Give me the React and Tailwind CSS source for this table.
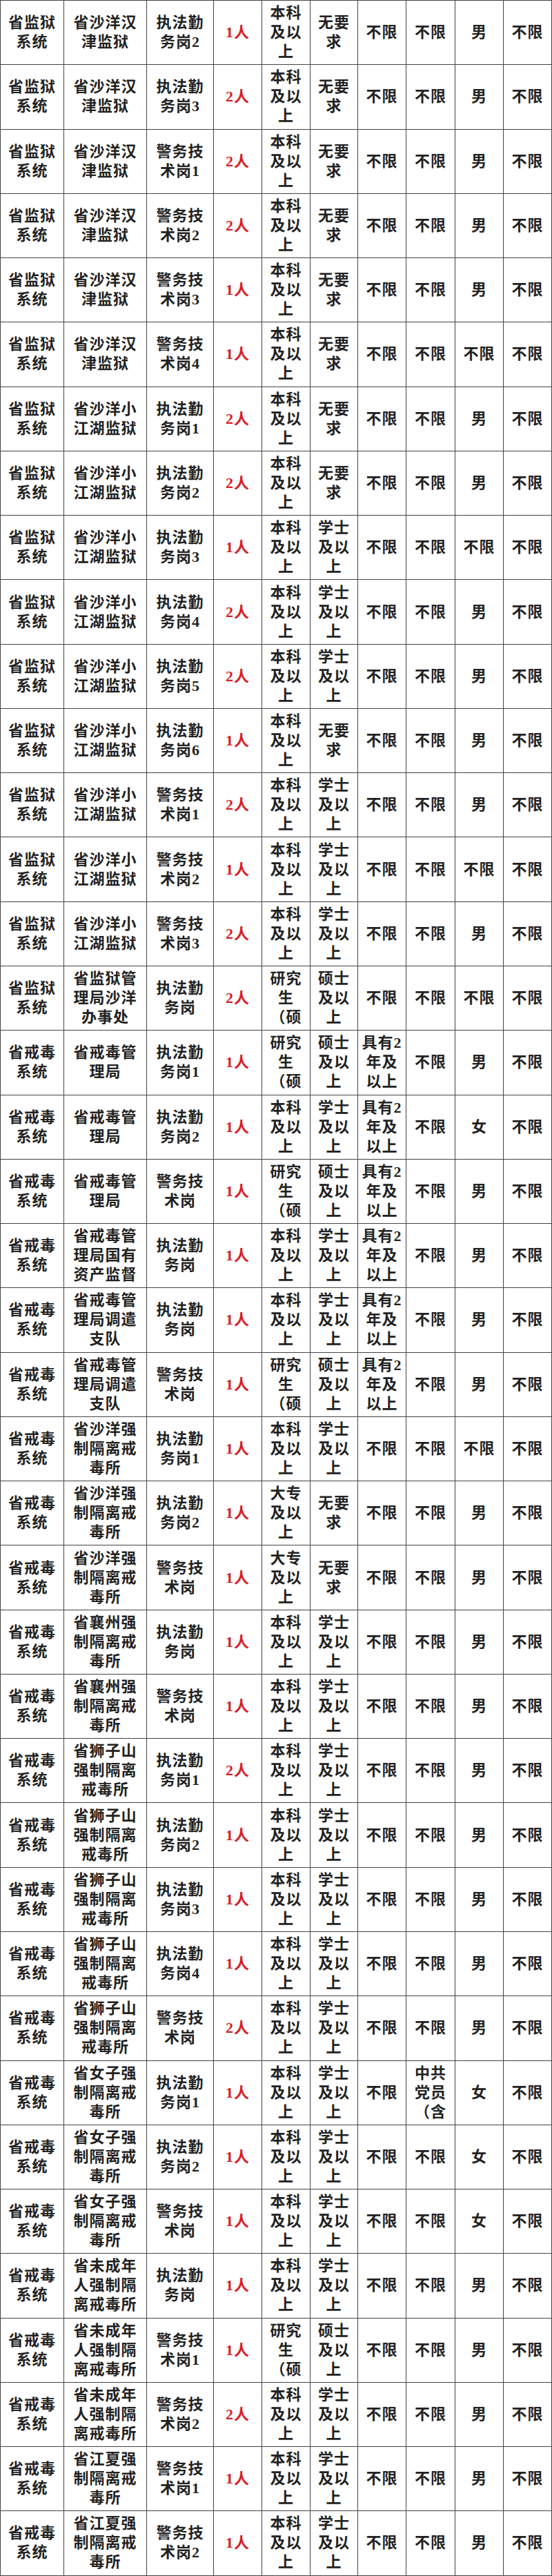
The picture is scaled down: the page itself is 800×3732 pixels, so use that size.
const BK = '本科\n及以\n上'
const DZ = '大专\n及以\n上'
const YJ = '研究\n生\n（硕'
const XS = '学士\n及以\n上'
const SS = '硕士\n及以\n上'
const WY = '无要\n求'
const JY = '具有2\n年及\n以上'
const BX = '不限'

const JYXT = '省监狱\n系统'
const JDXT = '省戒毒\n系统'

const HJ = '省沙洋汉\n津监狱'
const XJH = '省沙洋小\n江湖监狱'
const GLJ = '省戒毒管\n理局'
const DQ = '省戒毒管\n理局调遣\n支队'
const SY = '省沙洋强\n制隔离戒\n毒所'
const XZ = '省襄州强\n制隔离戒\n毒所'
const SZS = '省狮子山\n强制隔离\n戒毒所'
const NZ = '省女子强\n制隔离戒\n毒所'
const WCN = '省未成年\n人强制隔\n离戒毒所'
const JX = '省江夏强\n制隔离戒\n毒所'

const rows = [
  [JYXT, HJ, '执法勤\n务岗2', '1人', BK, WY, BX, BX, '男', BX],
  [JYXT, HJ, '执法勤\n务岗3', '2人', BK, WY, BX, BX, '男', BX],
  [JYXT, HJ, '警务技\n术岗1', '2人', BK, WY, BX, BX, '男', BX],
  [JYXT, HJ, '警务技\n术岗2', '2人', BK, WY, BX, BX, '男', BX],
  [JYXT, HJ, '警务技\n术岗3', '1人', BK, WY, BX, BX, '男', BX],
  [JYXT, HJ, '警务技\n术岗4', '1人', BK, WY, BX, BX, BX, BX],
  [JYXT, XJH, '执法勤\n务岗1', '2人', BK, WY, BX, BX, '男', BX],
  [JYXT, XJH, '执法勤\n务岗2', '2人', BK, WY, BX, BX, '男', BX],
  [JYXT, XJH, '执法勤\n务岗3', '1人', BK, XS, BX, BX, BX, BX],
  [JYXT, XJH, '执法勤\n务岗4', '2人', BK, XS, BX, BX, '男', BX],
  [JYXT, XJH, '执法勤\n务岗5', '2人', BK, XS, BX, BX, '男', BX],
  [JYXT, XJH, '执法勤\n务岗6', '1人', BK, WY, BX, BX, '男', BX],
  [JYXT, XJH, '警务技\n术岗1', '2人', BK, XS, BX, BX, '男', BX],
  [JYXT, XJH, '警务技\n术岗2', '1人', BK, XS, BX, BX, BX, BX],
  [JYXT, XJH, '警务技\n术岗3', '2人', BK, XS, BX, BX, '男', BX],
  [JYXT, '省监狱管\n理局沙洋\n办事处', '执法勤\n务岗', '2人', YJ, SS, BX, BX, BX, BX],
  [JDXT, GLJ, '执法勤\n务岗1', '1人', YJ, SS, JY, BX, '男', BX],
  [JDXT, GLJ, '执法勤\n务岗2', '1人', BK, XS, JY, BX, '女', BX],
  [JDXT, GLJ, '警务技\n术岗', '1人', YJ, SS, JY, BX, '男', BX],
  [JDXT, '省戒毒管\n理局国有\n资产监督', '执法勤\n务岗', '1人', BK, XS, JY, BX, '男', BX],
  [JDXT, DQ, '执法勤\n务岗', '1人', BK, XS, JY, BX, '男', BX],
  [JDXT, DQ, '警务技\n术岗', '1人', YJ, SS, JY, BX, '男', BX],
  [JDXT, SY, '执法勤\n务岗1', '1人', BK, XS, BX, BX, BX, BX],
  [JDXT, SY, '执法勤\n务岗2', '1人', DZ, WY, BX, BX, '男', BX],
  [JDXT, SY, '警务技\n术岗', '1人', DZ, WY, BX, BX, '男', BX],
  [JDXT, XZ, '执法勤\n务岗', '1人', BK, XS, BX, BX, '男', BX],
  [JDXT, XZ, '警务技\n术岗', '1人', BK, XS, BX, BX, '男', BX],
  [JDXT, SZS, '执法勤\n务岗1', '2人', BK, XS, BX, BX, '男', BX],
  [JDXT, SZS, '执法勤\n务岗2', '1人', BK, XS, BX, BX, '男', BX],
  [JDXT, SZS, '执法勤\n务岗3', '1人', BK, XS, BX, BX, '男', BX],
  [JDXT, SZS, '执法勤\n务岗4', '1人', BK, XS, BX, BX, '男', BX],
  [JDXT, SZS, '警务技\n术岗', '2人', BK, XS, BX, BX, '男', BX],
  [JDXT, NZ, '执法勤\n务岗1', '1人', BK, XS, BX, '中共\n党员\n（含', '女', BX],
  [JDXT, NZ, '执法勤\n务岗2', '1人', BK, XS, BX, BX, '女', BX],
  [JDXT, NZ, '警务技\n术岗', '1人', BK, XS, BX, BX, '女', BX],
  [JDXT, WCN, '执法勤\n务岗', '1人', BK, XS, BX, BX, '男', BX],
  [JDXT, WCN, '警务技\n术岗1', '1人', YJ, SS, BX, BX, '男', BX],
  [JDXT, WCN, '警务技\n术岗2', '2人', BK, XS, BX, BX, '男', BX],
  [JDXT, JX, '警务技\n术岗1', '1人', BK, XS, BX, BX, '男', BX],
  [JDXT, JX, '警务技\n术岗2', '1人', BK, XS, BX, BX, '男', BX],
]

export default function App() {
  return (
    <div className="w-[800px] bg-white border-t border-[#444] font-['Liberation_Serif','Noto_Sans_CJK_SC',serif] text-[22px] leading-[28px] tracking-[1px] font-bold text-[#222]">
      <div className="grid grid-cols-[93px_120px_97px_70px_70px_69px_70px_71px_70px_70px] auto-rows-[93.28px]">
        {rows.map((row, i) =>
          row.map((cell, j) => (
            <div
              key={`${i}-${j}`}
              className={`flex items-center justify-center overflow-hidden whitespace-pre-line text-center border-r border-b border-[#444] ${
                j === 0 ? 'border-l' : ''
              } ${j === 3 ? 'text-[#d81e27]' : ''}`}
            >
              {cell}
            </div>
          ))
        )}
      </div>
    </div>
  )
}
